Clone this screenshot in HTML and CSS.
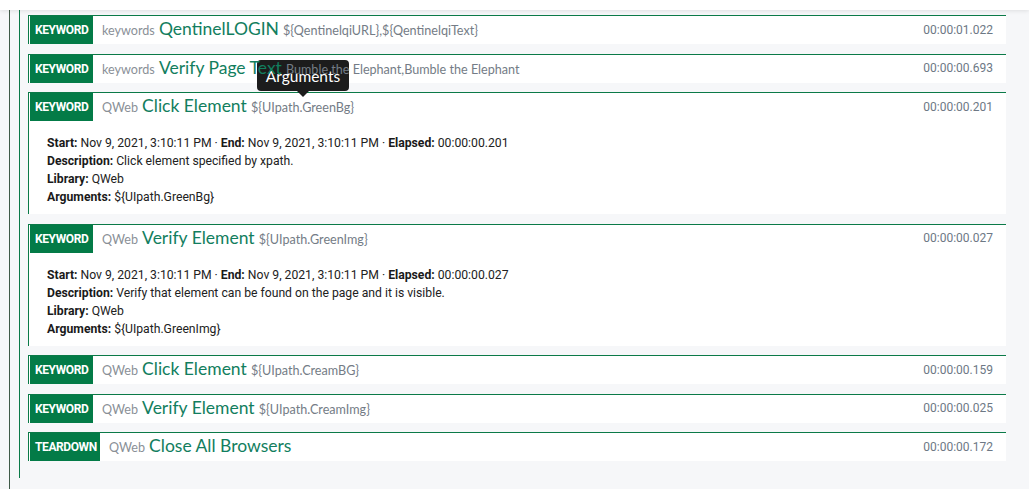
FILE: index.html
```html
<!DOCTYPE html>
<html>
<head>
<meta charset="utf-8">
<link rel="stylesheet" href="styles.css">
</head>
<body>
<div class="topbar"></div>
<div class="suite">
  <div class="test">
    <div class="kw">
      <div class="kw-head">
        <span class="badge">KEYWORD</span>
        <span class="title"><span class="lib">keywords</span> <span class="name">QentinelLOGIN</span> <span class="args">${QentinelqiURL},${QentinelqiText}</span></span>
        <span class="time">00:00:01.022</span>
      </div>
    </div>
    <div class="kw">
      <div class="kw-head">
        <span class="badge">KEYWORD</span>
        <span class="title"><span class="lib">keywords</span> <span class="name">Verify Page Text</span> <span class="args">Bumble the Elephant,Bumble the Elephant</span></span>
        <span class="time">00:00:00.693</span>
      </div>
    </div>
    <div class="kw">
      <div class="kw-head">
        <span class="badge">KEYWORD</span>
        <span class="title"><span class="lib">QWeb</span> <span class="name">Click Element</span> <span class="args">${UIpath.GreenBg}</span></span>
        <span class="time">00:00:00.201</span>
      </div>
      <div class="details">
        <div><b>Start:</b> Nov 9, 2021, 3:10:11 PM · <b>End:</b> Nov 9, 2021, 3:10:11 PM · <b>Elapsed:</b> 00:00:00.201</div>
        <div><b>Description:</b> Click element specified by xpath.</div>
        <div><b>Library:</b> QWeb</div>
        <div><b>Arguments:</b> ${UIpath.GreenBg}</div>
      </div>
    </div>
    <div class="kw">
      <div class="kw-head">
        <span class="badge">KEYWORD</span>
        <span class="title"><span class="lib">QWeb</span> <span class="name">Verify Element</span> <span class="args">${UIpath.GreenImg}</span></span>
        <span class="time">00:00:00.027</span>
      </div>
      <div class="details">
        <div><b>Start:</b> Nov 9, 2021, 3:10:11 PM · <b>End:</b> Nov 9, 2021, 3:10:11 PM · <b>Elapsed:</b> 00:00:00.027</div>
        <div><b>Description:</b> Verify that element can be found on the page and it is visible.</div>
        <div><b>Library:</b> QWeb</div>
        <div><b>Arguments:</b> ${UIpath.GreenImg}</div>
      </div>
    </div>
    <div class="kw">
      <div class="kw-head">
        <span class="badge">KEYWORD</span>
        <span class="title"><span class="lib">QWeb</span> <span class="name">Click Element</span> <span class="args">${UIpath.CreamBG}</span></span>
        <span class="time">00:00:00.159</span>
      </div>
    </div>
    <div class="kw">
      <div class="kw-head">
        <span class="badge">KEYWORD</span>
        <span class="title"><span class="lib">QWeb</span> <span class="name">Verify Element</span> <span class="args">${UIpath.CreamImg}</span></span>
        <span class="time">00:00:00.025</span>
      </div>
    </div>
    <div class="kw">
      <div class="kw-head">
        <span class="badge badge-td">TEARDOWN</span>
        <span class="title"><span class="lib">QWeb</span> <span class="name">Close All Browsers</span></span>
        <span class="time">00:00:00.172</span>
      </div>
    </div>
  </div>
</div>
<div class="tooltip">Arguments</div>
</body>
</html>
```
FILE: styles.css
```css
html, body {
  margin: 0;
  padding: 0;
}
body {
  background: #f6f7f9;
  font-family: Roboto, "Liberation Sans", sans-serif;
  min-height: 489px;
  position: relative;
  overflow: hidden;
}
.topbar {
  height: 10px;
  background: #ffffff;
  box-shadow: 0 1px 4px rgba(0, 0, 0, 0.10);
  position: relative;
  z-index: 1;
}
.suite {
  margin-left: 9px;
  border-left: 1px solid #3f5a48;
  padding-left: 9px;
  min-height: 479px;
}
.test {
  border-left: 1px solid #0b7a48;
  padding: 5px 23px 7.5px 8px;
}
.kw {
  background: #ffffff;
  border-top: 1px solid #0b7a48;
  border-left: 1px solid #0b7a48;
  padding-left: 1px;
  margin-bottom: 9.5px;
}
.kw-head {
  display: flex;
  align-items: center;
  height: 28px;
}
.badge {
  background: #037b47;
  color: #ffffff;
  font-family: Roboto, sans-serif;
  font-weight: 700;
  font-size: 12px;
  letter-spacing: -0.4px;
  height: 28px;
  line-height: 28px;
  padding: 0 5px 0 5px;
  width: 53px;
  text-align: center;
}
.badge-td {
  width: 60px;
}
.title {
  margin-left: 9px;
  flex: 1;
  white-space: nowrap;
  font-family: Lato, "Open Sans", sans-serif;
  padding-bottom: 3px;
  position: relative;
  z-index: 6;
}
.lib {
  font-size: 12.6px;
  color: #8a9097;
}
.name {
  font-size: 17.5px;
  color: #127e5e;
}
.args {
  font-size: 12.6px;
  color: #747c86;
}
.time {
  font-family: Roboto, sans-serif;
  font-size: 12px;
  color: #6d7885;
  padding-right: 13px;
  padding-bottom: 1px;
}
.details {
  padding: 13px 0 8px 17px;
  font-size: 12.2px;
  line-height: 18px;
  color: #222;
}
.details b {
  font-weight: 700;
  color: #1a1a1a;
}
.tooltip {
  position: absolute;
  left: 257px;
  top: 60px;
  width: 92px;
  height: 31px;
  line-height: 33px;
  background: #1c1c1c;
  color: #ffffff;
  border-radius: 4px;
  font-family: Lato, sans-serif;
  font-size: 15.5px;
  text-align: center;
  z-index: 5;
}
.tooltip::after {
  content: "";
  position: absolute;
  left: 40px;
  bottom: -6px;
  border-left: 6px solid transparent;
  border-right: 6px solid transparent;
  border-top: 6px solid #1c1c1c;
}
```
